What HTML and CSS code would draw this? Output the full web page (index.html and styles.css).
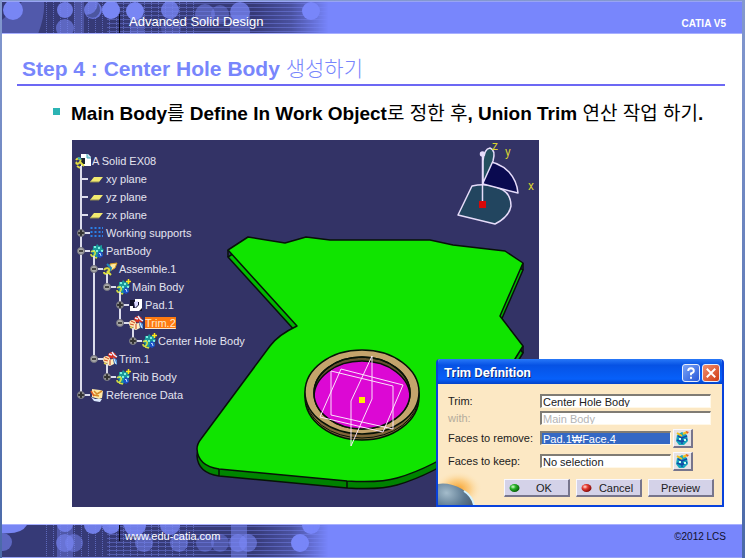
FILE: index.html
```html
<!DOCTYPE html>
<html lang="ko">
<head>
<meta charset="utf-8">
<title>Advanced Solid Design</title>
<link rel="stylesheet" href="styles.css">
</head>
<body>
<svg class="defs" aria-hidden="true">
  <defs>
    <linearGradient id="fade" x1="0" x2="1"><stop offset="0" stop-color="#fff"/><stop offset=".74" stop-color="#fff"/><stop offset=".85" stop-color="#fff" stop-opacity=".7"/><stop offset=".96" stop-color="#fff" stop-opacity="0"/></linearGradient>
    <mask id="fadeMask"><rect width="340" height="34" fill="url(#fade)"/></mask>
    <pattern id="vlines" width="7" height="34" patternUnits="userSpaceOnUse"><path d="M2.500 0v34" stroke="#7280e0" stroke-width="1" stroke-dasharray="1 1"/></pattern>
    <pattern id="hlines" width="8" height="4" patternUnits="userSpaceOnUse"><path d="M0 1.500h8" stroke="#7684ea" stroke-width="1"/></pattern>
    <radialGradient id="green" cx=".35" cy=".35" r=".7"><stop offset="0" stop-color="#d8ffd0"/><stop offset=".4" stop-color="#27b227"/><stop offset="1" stop-color="#055a05"/></radialGradient>
    <radialGradient id="red" cx=".35" cy=".35" r=".7"><stop offset="0" stop-color="#ffe0d8"/><stop offset=".4" stop-color="#e63a30"/><stop offset="1" stop-color="#7a0808"/></radialGradient>
    <symbol id="body" viewBox="0 0 16 16">
      <path d="M8 1l2 2 3-1v3l2 2-2 2 1 3-4 1-2 2-2-2-3 1 1-3-2-3 2-2 0-3 3 0z" fill="#1a9a9a"/>
      <path d="M5 3h2v2H5zM9 4h2v2H9zM4 7h2v2H4zM12 7h2v2h-2zM7 7h2v2H7z" fill="#7df0e0"/>
      <path d="M10 8l3 1 1 4-3 2-3-2z" fill="#1c50c8"/><path d="M10 11l1-1 1 3" fill="none" stroke="#bfe0ff"/>
      <path d="M2 9c2-2 5-1 4 2s-4 3-4 0M4 14l4 1" fill="none" stroke="#d8e040" stroke-width="1.500"/>
    </symbol>
    <symbol id="bodyplus" viewBox="0 0 16 16"><use href="#body"/><path d="M13.500 0v5M11 2.500h5" stroke="#ffe818" stroke-width="1.500"/></symbol>
    <symbol id="plane" viewBox="0 0 16 16"><path d="M5 6h9l-4 5H1z" fill="#f2ea70"/><path d="M1 11h9" stroke="#8d8a50"/></symbol>
    <symbol id="trim" viewBox="0 0 16 16">
      <path d="M6 3l3-2 4 1 2 4-2 2-6-1z" fill="#d83020"/><path d="M7 3l3 1M10 1l2 3 3 2" stroke="#e9f0ff" stroke-width="1.500" fill="none"/>
      <path d="M11 6l4 3v5l-3-2z" fill="#4f90d8"/><path d="M12 8l2 5" stroke="#e4f3ff"/>
      <circle cx="4.500" cy="8.500" r="3.500" fill="#ffe3b0"/><path d="M3 6l4 2M2 9l4 1" stroke="#d04820"/>
      <path d="M6 9l5-1 1 5-4 2-3-1z" fill="#fff0c0"/><path d="M8 9v5" stroke="#c8351c"/>
      <path d="M2 12l4 2" stroke="#e0d050" stroke-width="1.500"/>
    </symbol>
    <symbol id="assemble" viewBox="0 0 16 16"><path d="M8 3l7-1-2 5-5 3z" fill="#ffe9a0" stroke="#d69c20"/><path d="M5 3l4 4-1 3" stroke="#218bbc" stroke-width="2" fill="none"/><path d="M2 9c2-3 6-2 5 1s-5 4-5 1M5 10l4 4" fill="none" stroke="#dde040" stroke-width="2"/></symbol>
    <symbol id="pad" viewBox="0 0 16 16"><path d="M2 3h12v11H2z" fill="#12122a"/><path d="M7 2h7v9l-3 3H2V9h3v2h3l3-3V5H7z" fill="#fff"/><path d="M6 5l4-1v4l-3 3z" fill="#d8d7ff"/></symbol>
    <symbol id="support" viewBox="0 0 16 16"><path d="M2.500 2v12M6.500 2v12M10.500 2v12" stroke="#2a80e8" stroke-width="2" stroke-dasharray="2 2"/><path d="M13.500 2v12" stroke="#2a80e8" stroke-dasharray="2 2"/></symbol>
    <symbol id="refdata" viewBox="0 0 16 16"><path d="M3 2l8 1 3 1-1 7-3 1-7-2z" fill="#ffe9a8"/><path d="M5 4l3 3 5-3M5 8l5 1" stroke="#d68b28" fill="none" stroke-width="1.500"/><path d="M2 10l4 2h7l-2 3-6-1z" fill="#dce9ff"/><path d="M2 4l3 5" stroke="#e05b20" stroke-width="1.500"/></symbol>
    <symbol id="rootdoc" viewBox="0 0 16 16"><path d="M6 1h7l3 3v9H6z" fill="#fff"/><path d="M12 1v4h4" fill="#a9dce8" stroke="#45a9b9"/><path d="M5 5h5v6H6z" fill="#1b2530"/><path d="M1 7c2-3 6-1 4 2s-5 2-3 0M5 9l4 4M2 13l3 2" fill="none" stroke="#e0dc40" stroke-width="2"/><path d="M3 5l3 1" stroke="#32adb5" stroke-width="2"/></symbol>
    <symbol id="pick" viewBox="0 0 16 16"><path d="M3 5l5-3 5 3 1 6-4 4H5l-3-4z" fill="#15a7bd"/><path d="M4 6l4 2 5-2M8 8v6M3 10l5 2 5-3" stroke="#1648a8" stroke-width="1.500" fill="none"/><path d="M5 8h2v2H5zM10 9h2v2h-2z" fill="#c9fff0"/><path d="M3 3l5 3M9 4l4-2" stroke="#f0c020" stroke-width="2"/><path d="M12 1l3 1-2 2z" fill="#e55820"/></symbol>
    <g id="bubbles">
      <rect width="340" height="34" fill="#363a77"/>
      <rect x="40" width="155" height="34" fill="url(#vlines)" opacity=".65"/>
      <rect x="105" width="235" height="34" fill="url(#hlines)" opacity=".45"/>
    </g>
  </defs>
</svg>

<div class="slide">
  <header class="band top">
    <svg class="deco" width="340" height="34" aria-hidden="true">
      <g mask="url(#fadeMask)">
        <use href="#bubbles"/>
        <g fill="#7886f4">
          <path d="M20 0h22q1 14-6 32H0V18z" opacity=".42"/>
          <circle cx="11" cy="8" r="10"/>
          <circle cx="63" cy="8" r="8" opacity=".85"/><circle cx="63" cy="26" r="9" opacity=".6"/>
          <path d="M72 0h10v34H72z" opacity=".35"/>
          <circle cx="91" cy="8" r="9" opacity=".8"/><circle cx="109" cy="8" r="9"/>
          <circle cx="133" cy="9" r="9"/><path d="M128 14h14v20h-14z" opacity=".4"/>
          <circle cx="168" cy="8" r="9" opacity=".8"/><circle cx="169" cy="26" r="10" opacity=".3"/>
          <circle cx="203" cy="12" r="10" opacity=".5"/><circle cx="218" cy="12" r="9" opacity=".4"/>
          <circle cx="238" cy="10" r="10" opacity=".75"/><path d="M228 14h20v20h-20z" opacity=".4"/>
        </g>
        <path d="M84 13q11-1 12-12 5 9-2 14-6 2-10-2" fill="#4c56a0"/>
      </g>
      <circle cx="309" cy="9" r="9" fill="#7886fa"/>
    </svg>
    <p class="course">Advanced Solid Design</p>
    <p class="product">CATIA V5</p>
  </header>

  <main>
    <h1>Step 4 : Center Hole Body <span class="ko">생성하기</span></h1>
    <ul class="points">
      <li>Main Body<span class="ko">를</span> Define In Work Object<span class="ko">로 정한 후</span>, Union Trim <span class="ko">연산 작업 하기</span>.</li>
    </ul>

    <div class="stage">
      <div class="scene">
        <svg class="model" viewBox="0 0 467 367" preserveAspectRatio="xMinYMin meet" role="img" aria-label="Part model">
          <defs>
            <linearGradient id="side" x1="0" y1="0" x2="0" y2="1"><stop offset="0" stop-color="#00c400"/><stop offset=".5" stop-color="#00a800"/><stop offset="1" stop-color="#008000"/></linearGradient>
            <clipPath id="hole"><ellipse cx="290" cy="253" rx="48" ry="36"/></clipPath>
            <path id="plate" d="M156 110L176 97 213 103 234 97 258 100H358L381 105 433 111 451 123 428 176 451 206 430 240 400 300Q360 328 325 338 308 343 275 341L147 329Q126 326 125 309 125 304 129 299L198 206Q206 195 225 186Z"/>
          </defs>
          <g stroke="#071207" stroke-width="1.500" stroke-linejoin="round">
            <use href="#plate" y="7" fill="url(#side)"/>
            <path d="M156 110v7M451 123v7M451 206v7" />
            <use href="#plate" fill="#10e400"/>
            <path d="M147 329v7M275 341v7"/>
            <ellipse cx="290" cy="257" rx="57" ry="43" fill="#806438"/>
            <ellipse cx="290" cy="255" rx="57" ry="43" fill="#806438" stroke-width="1"/>
            <ellipse cx="290" cy="252" rx="57" ry="42" fill="#c4a46c"/>
            <ellipse cx="290" cy="253" rx="48" ry="36" fill="#65502f"/>
            <g clip-path="url(#hole)"><ellipse cx="290" cy="257" rx="48" ry="36" fill="#dc08d4"/></g>
            <ellipse cx="290" cy="253" rx="48" ry="36" fill="none"/>
          </g>
          <g fill="none" stroke="#fbe4fb">
            <path d="M300 216v43l-21 47v-45zM259 231l62 15v43l-62-14zM269 229l62 16-20 47-63-15z"/>
          </g>
          <path d="M287 257h6v6h-6z" fill="#ffee00"/>
          <g stroke="#e6dcfa" stroke-width="1.500" stroke-linejoin="round">
            <path d="M400 46L386 75 423 84Q437 77 439 66 439 55 431 50 417 42 400 46z" fill="#22455f"/>
            <path d="M411 21Q426 21 437 32 445 41 446 53L411 44z" fill="#0a0a50"/>
            <path d="M411 43L421 21Q424 10 418 8 412 9 411 21z" fill="#24505f"/>
            <path d="M410.500 14v48" fill="none"/><circle cx="410.500" cy="14" r="2" fill="#e6dcfa"/>
          </g>
          <path d="M407 61h7v7h-7z" fill="#d80808"/>
          <g class="axis"><text x="420" y="10">z</text><text x="433" y="16">y</text><text x="456" y="50">x</text></g>
        </svg>

        <div class="tree">
          <p class="row root"><svg class="icon"><use href="#rootdoc"/></svg>A Solid EX08</p>
          <ul>
            <li><p class="row"><i class="knob leaf"></i><svg class="icon"><use href="#plane"/></svg>xy plane</p></li>
            <li><p class="row"><i class="knob leaf"></i><svg class="icon"><use href="#plane"/></svg>yz plane</p></li>
            <li><p class="row"><i class="knob leaf"></i><svg class="icon"><use href="#plane"/></svg>zx plane</p></li>
            <li><p class="row"><i class="knob plus"></i><svg class="icon"><use href="#support"/></svg>Working supports</p></li>
            <li><p class="row"><i class="knob"></i><svg class="icon"><use href="#body"/></svg>PartBody</p>
              <ul>
                <li><p class="row"><i class="knob"></i><svg class="icon"><use href="#assemble"/></svg>Assemble.1</p>
                  <ul>
                    <li><p class="row"><i class="knob"></i><svg class="icon"><use href="#bodyplus"/></svg>Main Body</p>
                      <ul>
                        <li><p class="row"><i class="knob plus"></i><svg class="icon"><use href="#pad"/></svg>Pad.1</p></li>
                        <li><p class="row"><i class="knob"></i><svg class="icon"><use href="#trim"/></svg><mark>Trim.2</mark></p>
                          <ul>
                            <li><p class="row"><i class="knob plus"></i><svg class="icon"><use href="#bodyplus"/></svg>Center Hole Body</p></li>
                          </ul>
                        </li>
                      </ul>
                    </li>
                  </ul>
                </li>
                <li><p class="row"><i class="knob"></i><svg class="icon"><use href="#trim"/></svg>Trim.1</p>
                  <ul>
                    <li><p class="row"><i class="knob plus"></i><svg class="icon"><use href="#bodyplus"/></svg>Rib Body</p></li>
                  </ul>
                </li>
              </ul>
            </li>
            <li><p class="row"><i class="knob plus"></i><svg class="icon"><use href="#refdata"/></svg>Reference Data</p></li>
          </ul>
        </div>
      </div>

      <form class="dialog" role="dialog" aria-labelledby="dlg">
        <div class="titlebar">
          <h2 id="dlg">Trim Definition</h2>
          <button type="button" class="sys" aria-label="Help"><svg viewBox="0 0 17 17"><path d="M5.500 6.500Q5.500 3.500 8.500 3.500T11.500 6.300Q11.500 8 8.500 9v2M8.500 12.500v2" fill="none" stroke="#fff" stroke-width="2"/></svg></button>
          <button type="button" class="sys close" aria-label="Close"><svg viewBox="0 0 17 17"><path d="M4 4l9 9M13 4l-9 9" stroke="#fff" stroke-width="2"/></svg></button>
        </div>
        <div class="panel">
          <svg class="planet" viewBox="0 0 44 34" aria-hidden="true">
            <defs>
              <radialGradient id="glow"><stop offset="0" stop-color="#f7a028"/><stop offset=".5" stop-color="#fbc878" stop-opacity=".8"/><stop offset="1" stop-color="#fde8c0" stop-opacity="0"/></radialGradient>
              <radialGradient id="globe" cx=".45" cy=".2" r=".8"><stop offset="0" stop-color="#a4bccb"/><stop offset=".4" stop-color="#5b7890"/><stop offset="1" stop-color="#2b2e3a"/></radialGradient>
            </defs>
            <ellipse cx="20" cy="18" rx="24" ry="18" fill="url(#glow)"/>
            <ellipse cx="8" cy="36" rx="29" ry="23" transform="rotate(14 8 36)" fill="url(#globe)"/>
            <path d="M26 20q8 5 10 14" fill="none" stroke="#d2f2ff" stroke-width="2"/>
          </svg>
          <div class="field"><label for="trim-a">Trim:</label><input id="trim-a" type="text" value="Center Hole Body"></div>
          <div class="field"><label for="trim-b" class="off">with:</label><input id="trim-b" type="text" value="Main Body" disabled></div>
          <div class="field tall"><label for="rem">Faces to remove:</label><input id="rem" class="active" type="text" value="Pad.1₩Face.4"><button type="button" class="pick" aria-label="Edit faces to remove"><svg><use href="#pick"/></svg></button></div>
          <div class="field tall"><label for="keep">Faces to keep:</label><input id="keep" type="text" value="No selection"><button type="button" class="pick" aria-label="Edit faces to keep"><svg><use href="#pick"/></svg></button></div>
          <div class="actions">
            <button type="button"><svg class="ball" viewBox="0 0 11 11"><ellipse cx="5.500" cy="6" rx="5" ry="4" fill="url(#green)"/></svg><span>OK</span></button>
            <button type="button"><svg class="ball" viewBox="0 0 11 11"><ellipse cx="5.500" cy="6" rx="5" ry="4" fill="url(#red)"/></svg><span>Cancel</span></button>
            <button type="button"><span>Preview</span></button>
          </div>
        </div>
      </form>
    </div>
  </main>

  <footer class="band bottom">
    <svg class="deco" width="340" height="34" aria-hidden="true">
      <g mask="url(#fadeMask)">
        <use href="#bubbles"/>
        <g fill="#7886f4">
          <path d="M0 0h25q-6 10-25 8z"/><circle cx="1" cy="17" r="9" opacity=".6"/>
          <path d="M55 0h16v34H55z" opacity=".4"/><circle cx="63" cy="18" r="9" opacity=".6"/><circle cx="72" cy="18" r="9" opacity=".5"/><circle cx="63" cy="-1" r="8" opacity=".8"/>
          <circle cx="91" cy="0" r="9" opacity=".9"/><circle cx="109" cy="0" r="9" opacity=".9"/><circle cx="133" cy="0" r="11" opacity=".9"/>
          <circle cx="142" cy="18" r="9" opacity=".55"/><circle cx="168" cy="0" r="10" opacity=".8"/><circle cx="177" cy="18" r="9" opacity=".55"/>
          <circle cx="203" cy="18" r="9" opacity=".4"/><circle cx="218" cy="18" r="9" opacity=".4"/>
          <path d="M229 0h16v34h-16z" opacity=".5"/><circle cx="236" cy="18" r="9" opacity=".6"/><circle cx="246" cy="18" r="9" opacity=".6"/>
          <circle cx="298" cy="18" r="9"/><circle cx="309" cy="0" r="9"/>
        </g>
      </g>
    </svg>
    <a class="site" href="#">www.edu-catia.com</a>
    <p class="copy">©2012 LCS</p>
  </footer>
</div>
</body>
</html>
```
FILE: styles.css
```css
* { box-sizing: border-box; }
body, h1, h2, p, ul { margin: 0; padding: 0; }
ul { list-style: none; }
.defs { position: absolute; width: 0; height: 0; }

body {
  font-family: "Liberation Sans", "Noto Sans CJK KR", sans-serif;
  background: linear-gradient(#8398cf, #4a69a8);
}
.slide {
  min-height: 100vh;
  margin: 0 3px 0 2px;
  padding-top: 1px;
  display: flex;
  flex-direction: column;
}

/* Header and footer bands */
.band {
  position: relative;
  height: 33px;
  display: flex;
  justify-content: space-between;
  background: #7886fc;
  color: #fff;
  padding-right: 16px;
}
.deco { position: absolute; left: 0; top: 0; height: 100%; }
.top { border-top: 1px solid #98a4f4; border-bottom: 1px solid #a8b0ff; }
.bottom { height: 34px; border-top: 1px solid #a8b0ff; border-bottom: 1px solid #98a4f4; }
.course, .site { position: relative; border-left: 1px solid #080818; }
.course { margin: 12px 0 0 117px; padding-left: 9px; font-size: 13px; line-height: 16px; }
.product { padding-top: 14px; font-size: 10px; line-height: 16px; font-weight: bold; }
.site {
  height: 16px;
  margin-left: 117px;
  padding-left: 5px;
  font-size: 11px;
  line-height: 22px;
  color: #fff;
  text-decoration: none;
}
.copy { color: #10102c; font-size: 10px; line-height: 24px; }

/* Slide text */
main { flex: 1; background: #fff; padding: 22px 17px 16px 15px; }
h1 {
  padding: 0 5px 2px;
  border-bottom: 2px solid #6c68f4;
  color: #7886fc;
  font-size: 21px;
  line-height: 26px;
}
.ko { font-weight: 300; }
.points { padding: 16px 0 15px 36px; }
.points li {
  display: flow-root;
  font-size: 19px;
  line-height: 23px;
  font-weight: bold;
  white-space: nowrap;
}
.points li::before {
  content: "";
  float: left;
  width: 7px;
  height: 7px;
  margin: 6px 11px 0 0;
  background: #2cb4b4;
}
.points .ko { font-weight: 400; }

/* 3D viewport */
.stage { position: relative; margin-left: 55px; }
.scene {
  position: relative;
  min-height: 367px;
  margin-right: 186px;
  padding: 12px 0 0 3px;
  background: #333366;
  overflow: hidden;
}
.model { position: absolute; left: 0; top: 0; width: 100%; }
.axis { fill: #d8d030; font: 12px Roboto, sans-serif; }

.tree { position: relative; color: #e4e4f0; font-size: 11px; line-height: 18px; }
.row { display: flex; align-items: center; height: 18px; white-space: nowrap; }
.icon { width: 16px; height: 16px; margin-right: 1px; flex: none; }
.tree ul { margin-left: 1px; }
.tree ul ul { margin-left: 13px; }
.tree li { position: relative; }
.tree li::before {
  content: "";
  position: absolute;
  left: 4px;
  top: -4px;
  bottom: 0;
  width: 2px;
  background: #dcdcec;
}
.tree li:last-child::before { bottom: auto; height: 13px; }
.knob {
  position: relative;
  width: 8px;
  height: 8px;
  margin: 0 4px 0 1px;
  border: 1px solid #777780;
  border-radius: 4px;
  background: linear-gradient(#444, #444) center / 4px 2px no-repeat, #a8a8a8;
}
.knob::after { content: ""; position: absolute; left: 7px; top: 2px; width: 5px; height: 2px; background: #dcdcec; }
.plus { background: linear-gradient(#333, #333) center / 6px 2px no-repeat, linear-gradient(#333, #333) center / 2px 6px no-repeat, #909090; }
.leaf { background: none; border-color: transparent; }
.leaf::after { left: 2px; width: 8px; }
mark { background: #ff7a10; color: #ffe8c8; line-height: 12px; text-decoration: underline; }

/* Trim Definition window */
.dialog {
  position: absolute;
  right: 1px;
  bottom: 0;
  width: 288px;
  border: 2px solid #0842dc;
  border-top: 0;
  border-radius: 4px 4px 0 0;
  background: #fce8c4;
  overflow: hidden;
  font-size: 11px;
  line-height: 14px;
  color: #202020;
}
.titlebar {
  display: flex;
  align-items: center;
  gap: 2px;
  height: 25px;
  padding: 2px 2px 0 6px;
  background: linear-gradient(#2878f8, #0652e4 25%, #0660fa 80%, #0442c8);
  color: #fff;
}
.titlebar h2 { flex: 1; font: bold 13px/16px Roboto, sans-serif; text-shadow: 1px 1px #0a2a80; }
button { font: inherit; color: inherit; padding: 0; }
.sys { width: 18px; height: 18px; border: 1px solid #e8eefc; border-radius: 3px; background: linear-gradient(135deg, #7aa4f8, #2858d8); }
.sys svg { display: block; width: 16px; height: 16px; }
.close { background: linear-gradient(135deg, #f09070, #d03c14); }

.panel { position: relative; padding: 10px 11px 8px 10px; }
.planet { position: absolute; left: 0; bottom: 0; width: 44px; height: 34px; }
.field { display: flex; align-items: center; height: 14px; margin-bottom: 3px; }
.field label { width: 92px; flex: none; }
.off { color: #b4ac9c; }
.field input {
  flex: 1;
  min-width: 0;
  height: 14px;
  padding: 0 0 0 1px;
  border: 1px solid #fff8e8;
  border-top: 2px solid #807c74;
  border-left: 2px solid #807c74;
  border-radius: 0;
  background: #fff;
  color: #202020;
  font: inherit;
  line-height: 11px;
}
.field input:disabled { color: #b4b4b4; }
.field .active { background: #3468c4; color: #fff; }
.tall { height: 20px; }
.tall .pick { margin: 0 18px 0 2px; }
.pick, .actions button {
  border: 1px solid #f8f8ff;
  border-right: 2px solid #77758c;
  border-bottom: 2px solid #77758c;
  border-radius: 0;
  background: #d4d2e8;
}
.pick { width: 20px; height: 19px; background: #e6e2e4; }
.pick svg { display: block; width: 16px; height: 16px; }
.actions { position: relative; display: flex; justify-content: flex-end; gap: 6px; margin: 8px -3px 0 0; }
.actions button { width: 66px; height: 18px; display: flex; align-items: center; line-height: 14px; }
.actions span { flex: 1; text-align: center; }
.ball { width: 11px; height: 11px; margin-left: 4px; }
```
